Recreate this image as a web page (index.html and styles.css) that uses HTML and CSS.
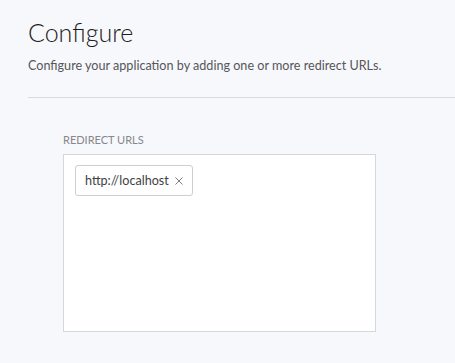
FILE: index.html
```html
<!DOCTYPE html>
<html lang="en">
<head>
    <meta charset="UTF-8" />
    <meta name="viewport" content="width=device-width, initial-scale=1.0" />
    <title>Configure</title>
    <link rel="stylesheet" href="styles.css">
</head>
<body>
    <div class="page">
        <div class="header">
            <h1>Configure</h1>
            <p class="intro">Configure your application by adding one or more redirect URLs.</p>
        </div>
        <div class="section">
            <label class="field-label">Redirect URLs</label>
            <div class="url-box">
                <span class="chip">http://localhost
                    <svg class="chip-remove" width="8" height="8" viewBox="0 0 8 8">
                        <path d="M0.5 0.5 L7.5 7.5 M7.5 0.5 L0.5 7.5" stroke="#7d7f84" stroke-width="1" fill="none" />
                    </svg>
                </span>
            </div>
        </div>
    </div>
</body>
</html>
```

FILE: styles.css
```css
body {
    margin: 0;
    padding: 0;
    font-family: Lato, "Open Sans", sans-serif;
    background-color: #f7f8fb;
    color: #333;
}
.page {
    padding: 0 0 0 28px;
}
.header {
    padding-top: 16px;
    padding-bottom: 23px;
    border-bottom: 1px solid #d9dadd;
}
h1 {
    margin: 0;
    font-size: 25px;
    font-weight: 300;
    color: #1d1d21;
    line-height: 32px;
}
.intro {
    margin: 10px 0 0 0;
    font-size: 12.6px;
    color: #55565a;
    line-height: 16px;
}
.section {
    padding: 35px 0 0 35px;
}
.field-label {
    display: block;
    font-size: 11px;
    text-transform: uppercase;
    color: #85878c;
    line-height: 14px;
    margin-bottom: 7px;
}
.url-box {
    box-sizing: border-box;
    display: flex;
    align-items: flex-start;
    width: 313px;
    height: 178px;
    background-color: white;
    border: 1px solid #d6d7da;
    padding: 10px 11px;
}
.chip {
    display: inline-flex;
    align-items: center;
    border: 1px solid #ccced2;
    border-radius: 3px;
    padding: 7px 9px 7px 9px;
    font-size: 12.6px;
    color: #3e3f43;
    line-height: 15px;
}
.chip-remove {
    margin-left: 6px;
}
```
